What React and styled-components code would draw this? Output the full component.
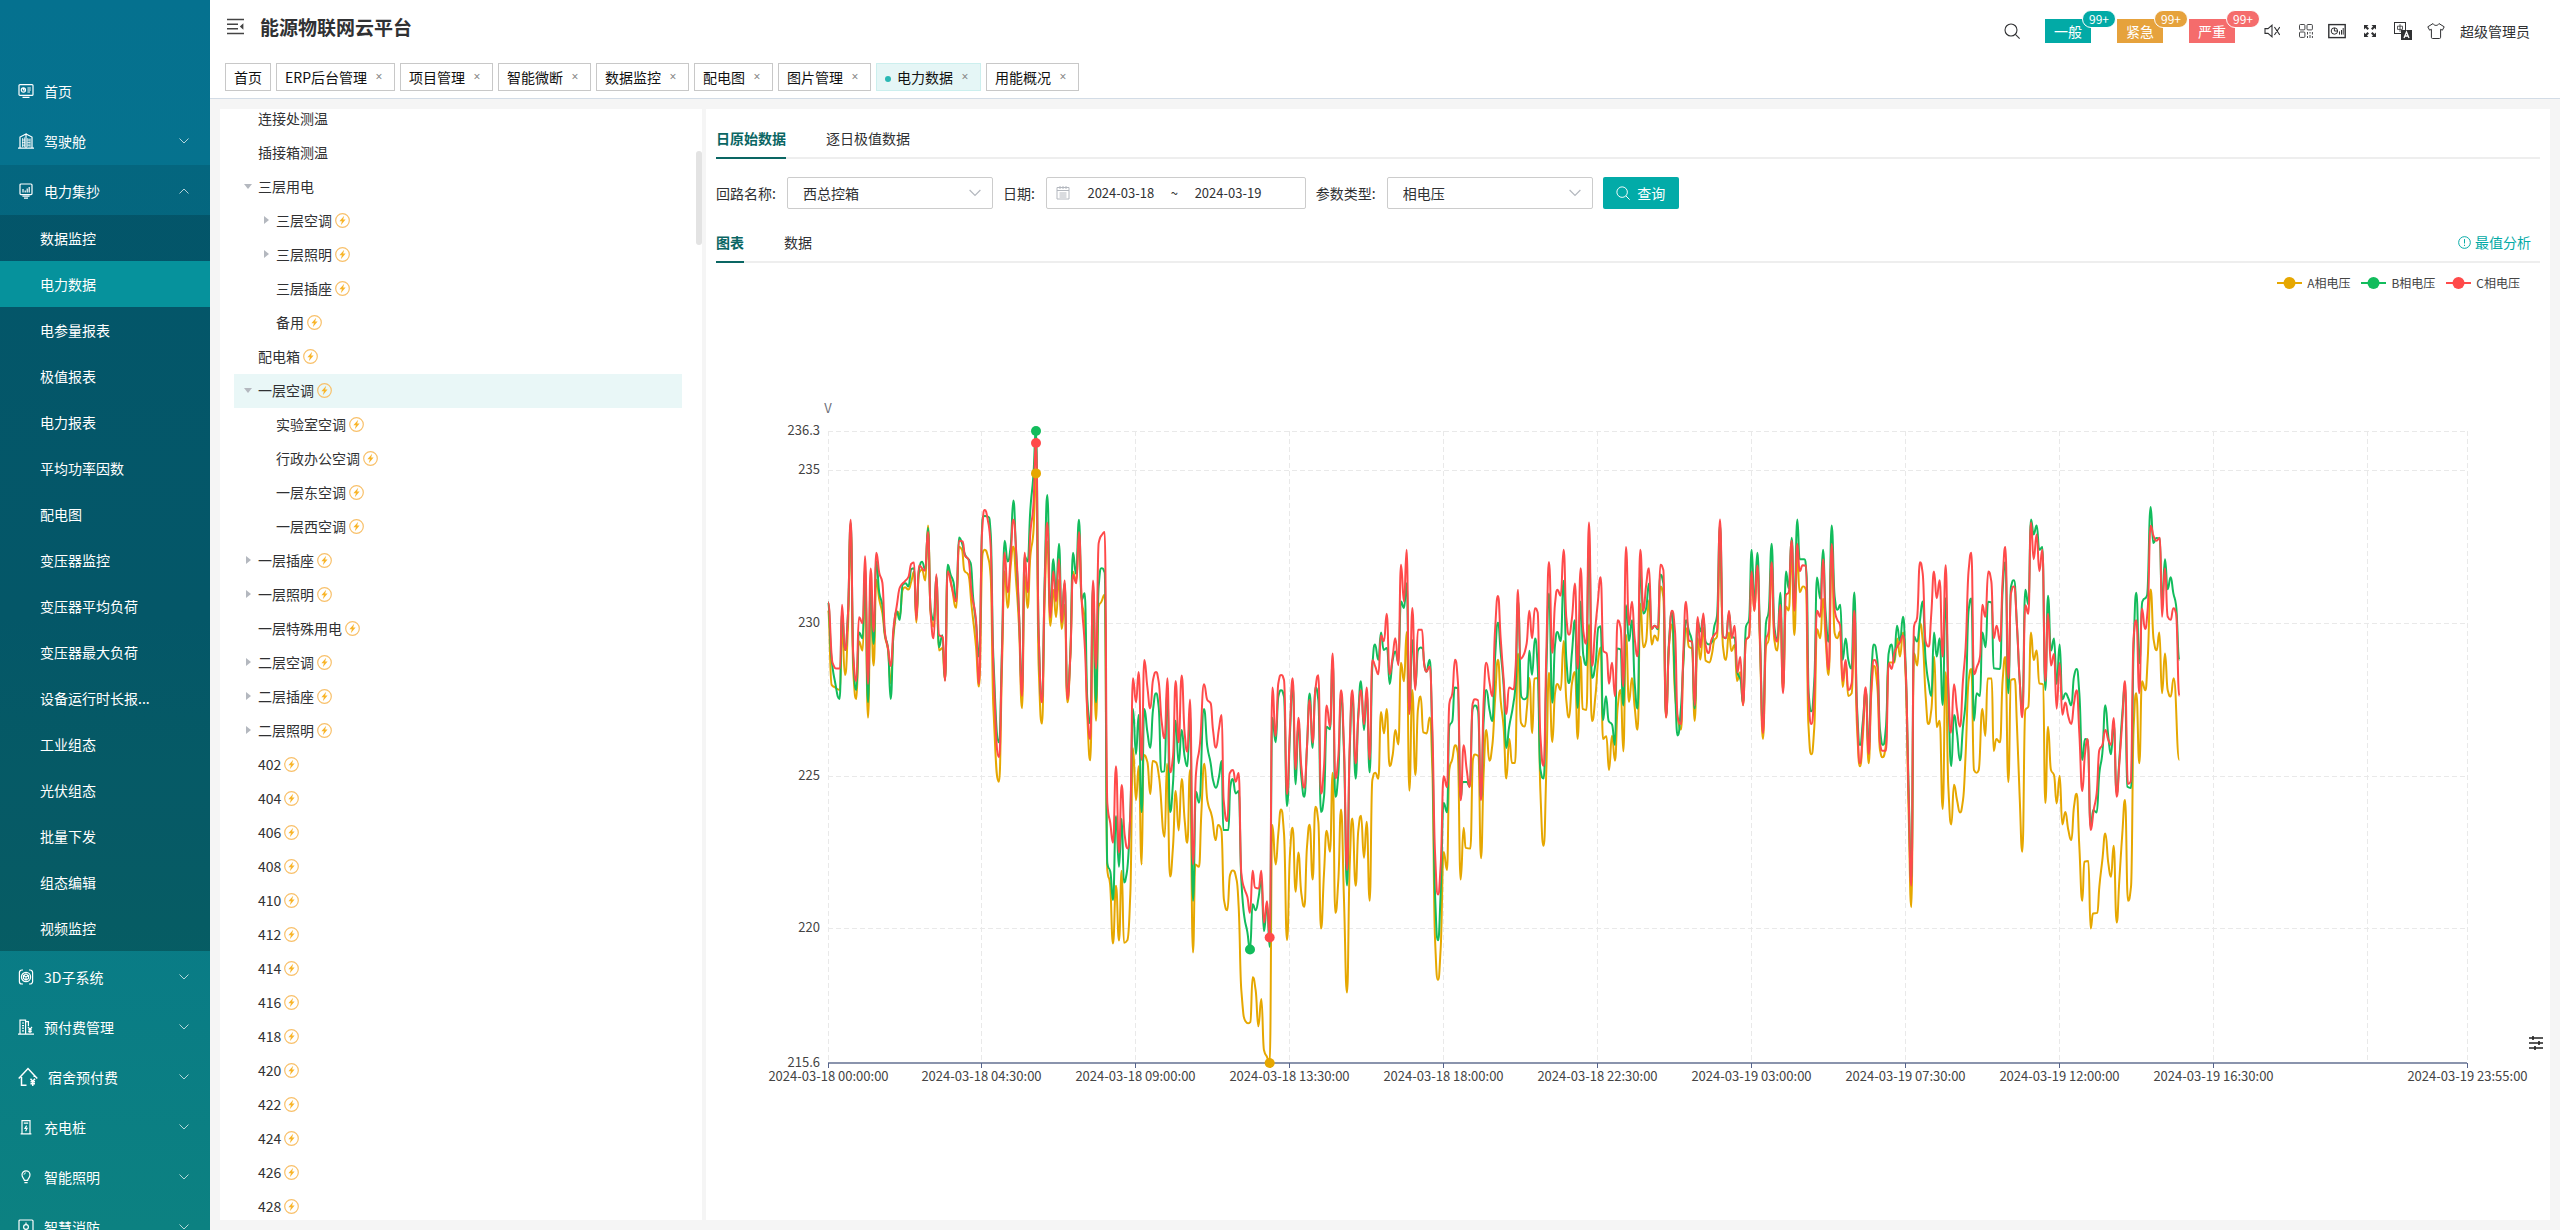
import { useEffect, useRef, useState } from "react";
import styled, { createGlobalStyle, css } from "styled-components";

const GlobalStyle = createGlobalStyle`
    * {
        box-sizing: border-box;
    }

    body {
        margin: 0;
        font-family: "Noto Sans CJK SC", "Noto Sans", sans-serif;
        font-size: 14px;
        line-height: 20px;
        color: #303133;
        background-color: #f5f5f5;
    }

    button, input, select {
        font: inherit;
        color: inherit;
    }

    button {
        padding: 0;
        border: 0;
        background: none;
        cursor: pointer;
    }

    ul {
        margin: 0;
        padding: 0;
        list-style: none;
    }

    a {
        color: inherit;
        text-decoration: none;
    }

    svg {
        display: block;
    }
`;

const Layout = styled.div`
    display: flex;
    height: 100vh;
    overflow: hidden;
`;

const Sidebar = styled.nav`
    flex: 0 0 210px;
    padding-top: 65px;
    overflow: hidden;
    color: #fff;
    background: linear-gradient(180deg, #05718f 0%, #06758b 50%, #0c8181 100%);
`;

const MenuItem = styled.button`
    display: flex;
    align-items: center;
    gap: 10px;
    width: 100%;
    height: 50px;
    padding: 2px 21px 0 18px;
    text-align: left;
    background-color: ${(props) => (props.$open ? "rgba(0, 0, 0, 0.1)" : "transparent")};
`;

const MenuLabel = styled.span`
    flex: 1;
`;

const SubMenu = styled.ul`
    background-color: rgba(0, 0, 0, 0.25);
`;

const SubMenuLink = styled.a`
    display: block;
    height: 46px;
    padding-left: 40px;
    line-height: 46px;
    background-color: ${(props) => (props.$active ? "#06929c" : "transparent")};
`;

const Main = styled.div`
    flex: 1;
    min-width: 0;
    display: flex;
    flex-direction: column;
`;

const Header = styled.header`
    background-color: #fff;
    border-bottom: 1px solid #d3dce6;
`;

const HeaderTop = styled.div`
    display: flex;
    align-items: center;
    height: 55px;
    padding: 0 30px 2px 17px;
`;

const Title = styled.h1`
    flex: 1;
    margin: 0 0 0 16px;
    font-size: 19px;
    line-height: 28px;
    font-weight: 700;
`;

const HeaderTools = styled.div`
    display: flex;
    align-items: center;
    gap: 15px;
    height: 100%;
    padding-top: 9px;
`;

const AlarmList = styled.div`
    display: flex;
    gap: 26px;
    margin: 0 12px 0 10px;
`;

const AlarmTag = styled.button`
    position: relative;
    width: 46px;
    height: 24px;
    color: #fff;
    background-color: ${(props) => props.$color};
`;

const AlarmBadge = styled.span`
    position: absolute;
    top: -9px;
    left: 37px;
    padding: 0 6px;
    border: 1px solid #fff;
    border-radius: 10px;
    font-size: 12px;
    line-height: 16px;
    background-color: ${(props) => props.$color};
`;

const PageTabs = styled.div`
    display: flex;
    gap: 5px;
    padding: 8px 15px 7px;
`;

const PageTab = styled.div`
    display: flex;
    align-items: center;
    height: 28px;
    padding: 0 8px 1px;
    color: #111;
    border: 1px solid #c8c8c8;

    ${(props) =>
        props.$active &&
        css`
            background-color: #e5f6f6;
            border-color: #ccefee;

            &::before {
                content: "";
                width: 6px;
                height: 6px;
                margin: 4px 6px 0 0;
                border-radius: 50%;
                background-color: #2ab8b4;
            }
        `}
`;

const CloseButton = styled.button`
    width: 14px;
    margin-left: 5px;
    padding-top: 1px;
    font-family: "Noto Sans", sans-serif;
    font-size: 12px;
    color: #888;
`;

const Content = styled.main`
    flex: 1;
    min-height: 0;
    display: flex;
    gap: 4px;
    padding: 10px;
`;

const TreePanel = styled.aside`
    display: flex;
    flex: 0 0 482px;
    overflow: hidden;
    background-color: #fff;
`;

const TreeList = styled.ul`
    flex: 1;
    margin: -7px 14px 0;
`;

const TreeRow = styled.li`
    display: flex;
    align-items: center;
    gap: 3px;
    height: 34px;
    padding: 0 0 2px ${(props) => 7 + props.$level * 18}px;
    background-color: ${(props) => (props.$active ? "#e9f7f7" : "transparent")};
`;

const Caret = styled.button`
    display: flex;
    justify-content: center;
    width: 14px;
    color: #b4b8bf;
`;

const ScrollBar = styled.div`
    width: 6px;
    height: 94px;
    margin-top: 42px;
    border-radius: 3px;
    background-color: #e3e3e3;
`;

const DataPanel = styled.section`
    position: relative;
    flex: 1;
    min-width: 0;
    display: flex;
    flex-direction: column;
    padding: 16px 10px 0;
    background-color: #fff;
`;

const TabBar = styled.div`
    display: flex;
    gap: 40px;
    height: 34px;
    box-shadow: inset 0 -2px #eee;
`;

const TabButton = styled.button`
    height: 34px;
    padding-bottom: 8px;

    ${(props) =>
        props.$active &&
        css`
            font-weight: 700;
            color: #0a6663;
            box-shadow: inset 0 -2px #0a6663;
        `}
`;

const ExtremeButton = styled.button`
    display: flex;
    align-items: center;
    gap: 4px;
    height: 26px;
    margin-left: auto;
    padding-right: 9px;
    color: #02aaa6;
`;

const Filters = styled.form`
    display: flex;
    align-items: center;
    gap: 10px;
    padding: 18px 0 20px;
`;

const Field = styled.div`
    display: flex;
    align-items: center;
    gap: 11px;
`;

const fieldBox = css`
    height: 32px;
    border: 1px solid #ccc;
    border-radius: 2px;
    background-color: #fff;
`;

const SelectBox = styled.div`
    display: flex;
    align-items: center;
    width: 206px;
    padding-right: 11px;
    ${fieldBox}
`;

const Select = styled.select`
    flex: 1;
    height: 30px;
    padding: 0 15px;
    border: 0;
    appearance: none;
    background: none;
`;

const DateBox = styled.div`
    display: flex;
    align-items: center;
    width: 260px;
    padding-left: 8px;
    font-size: 13px;
    ${fieldBox}
`;

const DateInput = styled.input`
    width: 100px;
    padding: 0;
    border: 0;
    text-align: center;
`;

const QueryButton = styled.button`
    display: flex;
    align-items: center;
    justify-content: center;
    gap: 7px;
    width: 76px;
    height: 32px;
    border-radius: 2px;
    color: #fff;
    background-color: #02aba8;
`;

const Legend = styled.div`
    display: flex;
    justify-content: flex-end;
    gap: 11px;
    padding: 10px 20px 0 0;
`;

const LegendItem = styled.button`
    display: flex;
    align-items: center;
    gap: 5px;
    font-size: 12px;
    color: #444;
`;

const ChartBox = styled.div`
    flex: 1;
    min-height: 0;
    overflow: hidden;
`;

const AxisText = styled.text`
    font-size: 13px;
    fill: ${(props) => props.$color || "#444"};
    text-anchor: ${(props) => props.$anchor || "middle"};
`;

const SettingsButton = styled.button`
    position: absolute;
    right: 6px;
    bottom: 169px;
    color: #222;
`;

const Icon = ({ size = 16, box = 16, width = 1.2, children }) => (
    <svg
        width={size}
        height={size}
        viewBox={`0 0 ${box} ${box}`}
        fill="none"
        stroke="currentColor"
        strokeWidth={width}
        aria-hidden="true"
    >
        {children}
    </svg>
);

const menuIcons = {
    home: (
        <>
            <rect x="1" y="1.6" width="14" height="10.8" rx="1" />
            <circle cx="5.4" cy="7" r="2.1" />
            <path d="M5.4 5v2h2M9.4 5h3.4M9.4 7h3.4M9.4 9h2.6M4.5 14.4h7" />
        </>
    ),
    tower: (
        <>
            <path d="M0 15.2h16M2 15V4L8 1v14M8 1l6 3v11" />
            <path d="M4.6 5v9M6.4 4.4v9.800M9.800 5v9M12 5.400v9M4 7h3M4 9.600h3M4 12.200h3M9.400 7h3M9.400 9.600h3M9.400 12.200h3" strokeWidth="0.8" />
        </>
    ),
    meter: (
        <>
            <rect x="2" y="1" width="12" height="10.600" rx="1" />
            <path d="M5 9.600V6M7.200 9.600V7.400M9.200 9.600V5.400M11.200 9.600V4M4.400 13.200h7.200M6 15.200h4" />
        </>
    ),
    cube: (
        <>
            <path d="M5 1H4A2.6 2.6 0 0 0 1.4 3.600v8.800A2.6 2.6 0 0 0 4 15h1M11 1h1a2.6 2.6 0 0 1 2.6 2.600v8.800A2.6 2.6 0 0 1 12 15h-1" />
            <circle cx="8" cy="8" r="4.6" />
            <path d="M8 5l2.600 1.500v3L8 11 5.400 9.500v-3zM5.400 6.500L8 8l2.600-1.500M8 8v3" />
        </>
    ),
    prepay: (
        <>
            <path d="M0 15.2h16M2 15V1.2h5.6V15M7.6 2.6h2.8V7M4 4h2M4 6.6h2M4 9.2h2M4 11.8h2" />
            <path d="M10 8l2 2.4L14 8M12 10.4V14M10.2 10.8h3.6M10.2 12.6h3.6" />
        </>
    ),
    dorm: (
        <>
            <path d="M0.6 9.2L8 1.2l7.4 8M2.8 8v6.6h4M13 8V7" />
            <path d="M10 9.4l1.8 2 1.8-2M11.8 11.4v3.8M10 11.8h3.6M10 13.4h3.6" />
        </>
    ),
    charge: (
        <>
            <path d="M4 14.6V1.6h8v13M2.6 14.8h10.8M5.8 4.2h4.4" />
            <path d="M8.6 6.6L7 9.4h2L7.6 12.2" />
        </>
    ),
    bulb: (
        <>
            <path d="M6.4 11.4C6.2 9.6 4 8.6 4 5.8a4 4 0 0 1 8 0c0 2.8-2.2 3.8-2.4 5.6zM6.4 13.6h3.2" />
            <path d="M6 5.8a2 2 0 0 1 2-2" strokeWidth="0.8" />
        </>
    ),
    fire: (
        <>
            <rect x="1" y="1" width="14" height="14" rx="1" />
            <circle cx="8" cy="8" r="2.4" />
            <path d="M8 3.4v2M8 10.6v2M4.8 12.6h6.4" />
        </>
    ),
};

const Chevron = ({ up, size = 10, color = "currentColor" }) => (
    <svg width={size} height={size} viewBox="0 0 10 10" fill="none" stroke={color} aria-hidden="true">
        <path d={up ? "M0.5 7.5L5 3l4.5 4.5" : "M0.5 2.5L5 7l4.5-4.5"} />
    </svg>
);

const SearchIcon = ({ size = 16 }) => (
    <Icon size={size} width={1.1}>
        <circle cx="7" cy="7" r="6" />
        <path d="M11.4 11.4l4.2 4.2" />
    </Icon>
);

const PowerIcon = () => (
    <svg width="15" height="15" viewBox="0 0 15 15" aria-hidden="true">
        <circle cx="7.5" cy="7.5" r="6.8" fill="none" stroke="#f8c06a" strokeWidth="1.2" />
        <path d="M9.2 2.8L4.4 8.2h2.5L5.8 12.2l4.8-5.600H8.100z" fill="#f9b52a" />
    </svg>
);

const menu = [
    { icon: "home", label: "首页", leaf: true },
    { icon: "tower", label: "驾驶舱" },
    {
        icon: "meter",
        label: "电力集抄",
        children: [
            "数据监控",
            "电力数据",
            "电参量报表",
            "极值报表",
            "电力报表",
            "平均功率因数",
            "配电图",
            "变压器监控",
            "变压器平均负荷",
            "变压器最大负荷",
            "设备运行时长报...",
            "工业组态",
            "光伏组态",
            "批量下发",
            "组态编辑",
            "视频监控",
        ],
    },
    { icon: "cube", label: "3D子系统" },
    { icon: "prepay", label: "预付费管理" },
    { icon: "dorm", label: "宿舍预付费", size: 20 },
    { icon: "charge", label: "充电桩" },
    { icon: "bulb", label: "智能照明" },
    { icon: "fire", label: "智慧消防" },
];

const alarms = [
    { label: "一般", color: "#02aaa6" },
    { label: "紧急", color: "#e6a23c" },
    { label: "严重", color: "#f56c6c" },
];

const pageTabs = [
    "首页",
    "ERP后台管理",
    "项目管理",
    "智能微断",
    "数据监控",
    "配电图",
    "图片管理",
    "电力数据",
    "用能概况",
];

// caret: "down" for an open node, "right" for a closed one
const tree = [
    { label: "连接处测温", plain: true },
    { label: "插接箱测温", plain: true },
    { label: "三层用电", caret: "down", plain: true },
    { label: "三层空调", level: 1, caret: "right" },
    { label: "三层照明", level: 1, caret: "right" },
    { label: "三层插座", level: 1 },
    { label: "备用", level: 1 },
    { label: "配电箱" },
    { label: "一层空调", caret: "down", active: true },
    { label: "实验室空调", level: 1 },
    { label: "行政办公空调", level: 1 },
    { label: "一层东空调", level: 1 },
    { label: "一层西空调", level: 1 },
    { label: "一层插座", caret: "right" },
    { label: "一层照明", caret: "right" },
    { label: "一层特殊用电" },
    { label: "二层空调", caret: "right" },
    { label: "二层插座", caret: "right" },
    { label: "二层照明", caret: "right" },
    ...[402, 404, 406, 408, 410, 412, 414, 416, 418, 420, 422, 424, 426, 428].map((n) => ({
        label: String(n),
    })),
];

// The curves are stored on a 4917 x 1894 grid (48h wide, 215.6V to 236.3V high),
// cut into four chunks that each have their own origin and vertical step.
const GRID_W = 4917;
const GRID_H = 1894;
const chunks = [
    { x: -84, y: -94, step: 1 },
    { x: 816, y: 506, step: 1 },
    { x: 1416, y: 146, step: 1.033 },
    { x: 2616, y: 146, step: 1 },
];

const series = [
    {
        name: "A相电压",
        color: "#e6a700",
        marks: [
            [624, 127],
            [1325, 1894],
        ],
        data: [
            "84,630 95,855 105,862 120,870 126,680 135,825 144,680 152,390 160,820 169,897 177,725 188,752 195,530 204,953 212,620 221,797 229,540 238,600 247,640 255,710 264,750 272,850 281,700 293,635 299,650 308,570 315,562 325,569 334,545 342,516 349,668 357,520 366,510 376,542 384,377 392,640 401,680 409,560 417,752 427,744 435,840 443,505 455,560 469,624 477,441 486,450 493,512 505,525 515,620 528,740 537,860 548,460 554,450 566,480 572,530 580,920 597,1145 606,800 614,515 623,624 632,500 640,441 648,540 657,680 666,925 674,525 683,624 691,470 700,400 708,221 716,800 726,971 734,600 742,425 751,678 760,570 768,652 777,540 785,687 794,615 802,907 811,770 819,516 828,545 837,420 845,600 854,660 862,950 871,1081 879,600 888,962 896,620 904,606 914,585",
            "22,810 30,850 39,1030 48,857 57,1021 65,812 72,1028 82,1020 91,880 99,445 108,600 116,499 125,793 131,465 142,485 151,582 158,483 168,487 177,530 194,710 201,491 210,829 219,740 227,573 236,691 245,537 254,660 262,728 270,510 279,1057 286,793 297,800 304,640 313,491 322,600 336,650 347,720 354,675 364,690 372,900 382,930 390,825 399,811 410,840 416,920 424,1170 436,1262 444,1269 451,1265 458,1131 467,1170 475,1278 484,1196 492,1350 501,1370 509,1388 517,675 527,793 535,700 543,628 552,700 561,1020 570,760 578,683 587,875 595,757 604,880 613,920 621,740 629,674 638,838 646,620 655,665 663,985 672,820 680,692 690,755 698,518 706,938 715,840 723,628 732,900 741,1177 749,800 757,655 767,857 775,690 783,647 792,773 800,665 809,902 817,540 826,518 835,536 843,336 852,400 860,327 869,498 878,465 886,390",
            "295,768 303,531 312,585 320,442 328,902 337,610 346,857 354,665 362,629 370,733 380,736 389,690 397,840 405,1330 414,1451 422,1360 431,1080 441,1132 448,840 457,810 465,770 473,790 482,1160 491,1010 497,1068 511,1070 519,810 525,797 535,802 543,1098 551,850 559,726 568,815 577,770 585,640 594,522 602,640 611,720 619,867 628,752 636,822 645,822 654,504 663,705 674,716 681,660 688,575 697,735 703,577 714,575 721,900 731,1062 739,840 747,560 757,761 765,620 772,593 782,610 791,468 799,640 807,690 816,590 825,558 833,752 842,513 848,665 859,668 867,420 876,700 887,620 895,520 902,487 909,752 919,744 927,842 936,743 945,815 953,660 962,610 970,788 978,450 987,645 996,575 1004,660 1013,725 1021,360 1030,486 1038,470 1047,350 1055,478 1064,452 1074,467 1081,310 1090,340 1098,690 1107,480 1116,420 1125,620 1133,690 1143,725 1150,530 1158,430 1167,485 1176,490 1184,700 1193,460 1201,522 1210,430 1217,525 1228,530 1236,505 1243,465 1251,455",
            "60,200 69,500 78,540 87,457 94,513 104,495 111,603 121,577 129,676 138,480 147,470 155,290 163,393 172,265 180,500 189,777 198,500 206,480 215,270 223,480 232,512 241,385 249,630 258,380 266,392 275,230 283,466 292,230 299,337 309,320 318,330 325,730 334,823 343,740 351,448 361,475 369,357 377,480 386,585 395,230 404,460 412,475 420,455 428,621 437,550 445,648 455,640 463,458 471,740 480,859 489,760 497,630 506,850 514,640 522,558 532,620 540,810 548,832 557,800 566,548 583,548 592,476 600,530 609,458 617,590 626,1000 634,1281 642,520 652,557 660,430 668,480 677,650 685,732 694,690 703,531 710,741 719,722 728,987 737,577 745,920 754,1033 762,914 771,960 780,997 789,960 797,820 806,600 814,567 822,870 830,878 836,870 847,686 856,768 863,596 875,596 881,813 889,777 900,787 908,600 916,531 925,906 933,600 944,597 951,740 959,950 967,1115 976,690 985,680 993,458 1001,540 1010,512 1018,610 1029,613 1036,969 1044,740 1053,870 1062,885 1070,970 1079,887 1087,1033 1096,996 1105,1050 1114,1080 1122,980 1130,941 1138,1100 1147,1262 1153,1145 1165,1143 1172,1345 1179,1300 1192,1298 1198,1220 1207,1140 1216,1060 1225,1150 1233,1190 1241,1097 1250,1327 1258,1200 1267,1060 1275,960 1284,1262 1293,1220 1301,740 1309,640 1318,850 1326,604 1336,631 1343,540 1352,329 1361,480 1370,511 1378,458 1386,640 1395,521 1403,630 1412,650 1421,595 1438,840",
        ],
    },
    {
        name: "B相电压",
        color: "#12bc5c",
        marks: [
            [624, 0],
            [1266, 1554],
        ],
        data: [
            "84,607 94,770 104,840 119,897 126,640 135,750 144,640 152,370 160,780 169,870 177,698 188,715 195,500 204,907 212,560 221,732 229,485 238,580 247,615 255,705 264,745 272,897 281,690 290,635 299,660 308,555 317,550 325,560 334,508 342,505 349,650 357,510 366,486 376,510 384,385 392,630 401,660 409,530 417,742 427,706 435,840 443,495 452,525 460,545 469,600 477,413 486,430 495,465 512,490 520,600 528,670 537,770 548,352 554,349 566,352 572,400 580,770 597,1027 606,740 614,423 623,485 632,440 640,302 648,450 657,640 666,860 674,470 683,485 691,330 700,230 708,93 716,700 726,900 734,540 742,286 751,640 760,478 768,580 777,432 785,650 794,550 802,885 811,760 819,459 828,522 837,360 845,600 854,580 862,900 871,970 879,560 888,907 896,560 904,505 914,518",
            "22,790 31,815 39,900 48,648 57,800 65,656 72,847 80,820 91,640 99,327 108,462 116,345 125,636 133,327 142,395 151,443 159,330 168,280 176,320 184,515 193,514 202,280 210,636 219,550 227,362 236,490 245,390 254,470 262,499 270,340 279,902 288,575 297,608 312,327 322,440 332,490 339,540 348,563 357,530 365,483 370,690 385,690 391,560 398,537 407,580 416,573 424,840 433,950 442,995 450,1048 458,912 467,930 476,890 484,840 492,993 501,915 509,1040 517,353 527,427 535,290 543,271 552,290 561,618 570,400 578,255 587,553 595,370 604,530 613,590 621,440 629,281 638,444 646,262 655,300 663,636 672,590 680,380 690,388 698,180 706,590 715,520 723,290 732,460 741,856 749,460 757,285 767,536 775,340 783,244 792,390 800,280 809,517 817,200 825,134 835,180 843,98 851,150 861,144 869,252 878,180 886,155",
            "295,530 303,353 312,372 320,300 328,670 337,465 346,600 354,495 362,487 368,490 373,535 379,557 389,522 397,760 405,1200 414,1336 422,1200 431,938 441,965 448,715 457,700 464,603 473,605 482,925 488,877 500,877 509,890 518,665 525,655 534,670 543,925 551,700 559,610 569,670 577,700 585,520 594,415 602,500 611,600 619,778 627,720 640,650 647,590 654,350 664,630 673,637 681,630 688,496 696,566 705,461 713,540 721,840 731,867 739,560 747,330 757,647 765,480 772,442 782,468 791,293 799,520 807,590 816,500 825,408 833,662 842,353 850,510 859,538 867,180 876,575 887,530 895,430 902,425 909,698 918,628 926,700 936,710 945,770 951,490 961,492 970,655 978,364 987,468 996,408 1004,590 1013,664 1021,260 1030,388 1038,375 1047,301 1055,433 1064,424 1074,434 1080,275 1090,300 1098,685 1107,470 1116,385 1125,600 1133,742 1143,660 1150,530 1158,408 1167,440 1176,470 1184,664 1193,410 1201,440 1210,400 1217,470 1228,478 1236,470 1243,425 1251,395",
            "60,135 69,470 78,475 87,400 95,470 104,475 112,577 122,601 129,670 138,440 147,420 155,210 163,370 172,219 180,470 189,740 198,430 206,395 215,192 223,440 232,480 241,339 249,620 258,275 266,325 275,174 283,370 292,119 299,238 313,238 320,290 326,640 334,694 343,600 351,293 361,357 369,210 377,400 386,485 395,137 404,350 412,390 421,375 428,540 437,476 445,540 454,566 463,338 471,680 480,795 489,720 497,630 506,800 514,580 522,494 532,540 540,750 549,795 558,740 566,520 575,494 582,545 591,438 600,484 609,411 617,560 626,930 634,1200 642,470 651,485 660,420 668,365 677,540 686,610 694,648 702,458 710,530 719,475 728,675 737,355 745,640 754,858 762,705 771,760 780,841 789,740 797,660 806,390 814,356 822,722 830,640 840,648 847,458 857,502 864,366 875,368 881,565 900,567 908,330 916,247 925,640 933,320 942,301 951,440 959,600 967,690 976,330 985,374 993,119 1001,164 1010,137 1018,210 1027,202 1036,630 1044,348 1053,512 1062,476 1070,612 1079,494 1087,658 1097,640 1105,655 1114,676 1122,590 1130,567 1138,640 1147,840 1155,777 1163,780 1172,1040 1180,990 1190,997 1198,880 1207,820 1216,676 1225,770 1233,823 1241,730 1250,940 1258,840 1267,700 1275,620 1282,920 1293,924 1301,500 1309,339 1318,550 1327,365 1341,347 1352,82 1360,190 1369,175 1379,176 1386,370 1395,238 1403,328 1412,292 1420,340 1428,375 1438,540",
        ],
    },
    {
        name: "C相电压",
        color: "#ff4a4a",
        marks: [
            [624, 36],
            [1325, 1518],
        ],
        data: [
            "84,607 98,790 110,806 120,806 126,615 135,750 144,640 152,360 160,770 169,843 177,652 188,670 195,469 204,852 212,506 221,695 229,459 238,520 247,548 255,700 264,745 272,798 281,680 290,620 300,562 315,544 325,532 334,492 342,488 349,660 357,497 375,513 384,397 392,640 401,715 409,523 417,705 428,712 435,843 443,515 455,560 469,605 477,423 488,425 495,468 505,478 515,580 528,660 537,852 546,400 554,331 565,370 572,440 580,800 597,1072 606,760 614,459 623,577 632,470 640,360 650,480 657,640 666,888 674,459 683,577 691,400 700,320 708,130 716,700 726,907 734,560 742,369 751,652 760,515 768,605 777,478 785,668 794,542 802,897 811,770 819,525 829,550 837,397 845,600 855,750 862,930 871,1017 879,542 888,806 896,430 906,405 914,397",
            "22,610 31,670 39,728 48,499 57,757 65,555 74,705 83,745 91,640 99,235 108,307 116,216 125,480 133,180 142,260 151,325 159,240 168,216 176,245 185,365 194,415 202,235 210,517 219,470 227,243 236,427 245,227 254,400 262,455 270,299 279,793 288,520 300,430 312,253 322,300 332,310 339,390 348,443 357,385 365,345 371,600 382,663 389,520 399,510 407,545 416,519 424,820 433,865 442,890 450,938 458,812 465,862 476,865 484,812 492,967 501,903 509,1012 517,263 527,408 535,250 543,225 552,240 561,582 570,380 578,235 587,508 595,353 604,500 613,563 621,440 629,300 638,428 646,270 655,226 663,580 672,500 680,317 690,380 698,161 706,535 715,470 723,271 732,440 741,810 749,440 757,271 767,490 775,350 783,271 792,373 800,263 809,478 817,181 826,200 835,223 843,107 852,124 860,42 869,223 878,170 886,115",
            "295,538 303,247 312,353 320,203 328,680 337,372 346,610 354,435 366,435 373,540 379,557 389,542 397,720 405,1080 414,1203 422,1120 431,860 441,892 448,650 457,620 465,522 474,590 482,930 491,770 500,840 509,892 518,650 525,637 534,640 543,930 551,640 559,531 569,590 577,628 585,440 594,337 602,460 611,580 619,680 627,603 640,608 647,540 654,319 661,520 670,510 680,475 688,380 696,460 705,373 713,385 721,740 731,830 739,500 747,239 757,502 765,360 772,319 782,336 791,203 799,400 807,450 816,400 825,301 833,548 842,257 850,440 859,476 867,124 876,540 885,440 893,360 902,283 910,497 920,504 927,592 936,531 945,628 953,408 962,430 970,600 978,195 987,422 996,354 1004,460 1013,512 1021,203 1030,380 1038,310 1047,257 1055,433 1064,424 1074,430 1081,247 1090,262 1098,690 1107,480 1116,380 1125,440 1133,690 1143,709 1150,500 1158,354 1167,467 1176,470 1184,655 1193,398 1201,486 1210,388 1217,480 1226,503 1234,465 1243,450 1251,440",
            "60,119 69,470 78,475 87,393 95,475 104,438 112,577 121,531 129,676 138,480 147,470 155,275 163,393 172,257 180,480 189,760 198,480 206,455 215,247 223,460 232,485 241,375 249,640 258,345 266,338 275,183 283,393 292,192 299,274 308,256 318,258 325,640 334,732 343,640 351,393 361,411 369,238 377,440 386,568 395,193 404,390 412,420 420,435 428,603 437,540 445,630 455,610 463,393 471,700 480,850 489,740 497,622 506,822 514,620 522,540 532,560 540,790 547,812 558,812 566,550 575,567 583,520 592,500 601,485 609,467 617,570 626,950 634,1217 642,440 651,415 660,247 668,280 677,485 686,500 694,400 702,275 710,355 719,301 728,530 737,256 745,620 753,758 762,613 771,690 780,740 789,600 797,500 806,270 814,219 822,583 831,560 840,530 847,375 856,411 865,275 874,305 881,475 890,438 900,484 908,300 916,202 925,595 933,340 942,320 951,440 959,600 967,712 976,376 985,402 993,128 1001,238 1010,164 1018,274 1027,210 1036,603 1044,402 1053,557 1062,522 1070,686 1079,549 1087,704 1096,668 1105,710 1114,732 1122,670 1130,631 1138,760 1147,933 1155,820 1163,777 1172,1050 1181,990 1190,940 1198,810 1207,795 1216,750 1225,780 1233,795 1241,714 1250,950 1258,850 1267,720 1275,604 1284,912 1292,905 1301,470 1309,421 1318,640 1326,386 1335,447 1343,390 1352,138 1361,170 1369,183 1380,174 1386,411 1395,265 1403,410 1412,420 1420,385 1428,400 1438,648",
        ],
    },
];

const yTicks = [236.3, 235, 230, 225, 220, 215.6];

// one tick every 54 five-minute slots, the last slot is 575
const xTicks = [
    { slot: 0, label: "2024-03-18 00:00:00" },
    { slot: 54, label: "2024-03-18 04:30:00" },
    { slot: 108, label: "2024-03-18 09:00:00" },
    { slot: 162, label: "2024-03-18 13:30:00" },
    { slot: 216, label: "2024-03-18 18:00:00" },
    { slot: 270, label: "2024-03-18 22:30:00" },
    { slot: 324, label: "2024-03-19 03:00:00" },
    { slot: 378, label: "2024-03-19 07:30:00" },
    { slot: 432, label: "2024-03-19 12:00:00" },
    { slot: 486, label: "2024-03-19 16:30:00" },
    { slot: 540 },
    { slot: 575, label: "2024-03-19 23:55:00" },
];

const readPoints = (data) =>
    data.flatMap((part, i) => {
        const { x, y, step } = chunks[i];
        return part.split(" ").map((pair) => {
            const [px, py] = pair.split(",").map(Number);
            return [px + x, py * step + y];
        });
    });

// Monotone curve with handles half a step long, flat at every peak and dip
const smoothPath = (points) => {
    const slope = (a, b) => (b[1] - a[1]) / (b[0] - a[0]);
    const tangents = points.map((p, i) => {
        if (i === 0 || i === points.length - 1) return 0;
        const before = slope(points[i - 1], p);
        const after = slope(p, points[i + 1]);
        if (before * after <= 0) return 0;
        return (2 * before * after) / (before + after);
    });

    return points.reduce((path, p, i) => {
        if (i === 0) return `M${p[0]},${p[1]}`;
        const prev = points[i - 1];
        const dx = (p[0] - prev[0]) / 2;
        const c1 = `${prev[0] + dx},${prev[1] + tangents[i - 1] * dx}`;
        const c2 = `${p[0] - dx},${p[1] - tangents[i] * dx}`;
        return `${path}C${c1} ${c2} ${p[0]},${p[1]}`;
    }, "");
};

const margin = { top: 138, right: 73, bottom: 157, left: 112 };

const VoltageChart = () => {
    const ref = useRef(null);
    const [size, setSize] = useState({ width: 0, height: 0 });

    useEffect(() => {
        const observer = new ResizeObserver(([entry]) => {
            const { width, height } = entry.contentRect;
            setSize({ width: Math.round(width), height: Math.round(height) });
        });
        observer.observe(ref.current);
        return () => observer.disconnect();
    }, []);

    const plotW = Math.max(size.width - margin.left - margin.right, 0);
    const plotH = Math.max(size.height - margin.top - margin.bottom, 0);
    const right = margin.left + plotW;
    const bottom = margin.top + plotH;
    const slotX = (slot) => Math.floor(margin.left + (slot / 575) * plotW) + 0.5;
    const voltY = (volt) => Math.floor(margin.top + ((236.3 - volt) / 20.7) * plotH) + 0.5;
    const toPlot = ([x, y]) => [
        margin.left + (x / GRID_W) * plotW,
        margin.top + (y / GRID_H) * plotH,
    ];

    return (
        <ChartBox ref={ref}>
            {plotW > 0 && (
                <svg width={size.width} height={size.height} role="img" aria-label="相电压">
                    <AxisText x={margin.left} y={margin.top - 18} $color="#6e7079">
                        V
                    </AxisText>
                    <g stroke="#e9e9e9" strokeDasharray="5 3">
                        {yTicks.slice(0, -1).map((volt) => (
                            <line key={volt} x1={margin.left} x2={right} y1={voltY(volt)} y2={voltY(volt)} />
                        ))}
                        {xTicks.map(({ slot }) => (
                            <line key={slot} x1={slotX(slot)} x2={slotX(slot)} y1={margin.top} y2={bottom} />
                        ))}
                    </g>
                    {yTicks.map((volt) => (
                        <AxisText key={volt} x={margin.left - 8} y={voltY(volt) + 3} $anchor="end">
                            {volt}
                        </AxisText>
                    ))}
                    <line x1={margin.left} x2={right} y1={bottom} y2={bottom} stroke="#8a94ad" strokeWidth="2" />
                    {xTicks
                        .filter(({ label }) => label)
                        .map(({ slot, label }) => (
                            <g key={slot}>
                                <path d={`M${slotX(slot)} ${bottom}v5`} stroke="#56648c" />
                                <AxisText x={slotX(slot)} y={bottom + 18}>
                                    {label}
                                </AxisText>
                            </g>
                        ))}
                    {series.map(({ name, color, data }) => (
                        <path
                            key={name}
                            d={smoothPath(readPoints(data).map(toPlot))}
                            fill="none"
                            stroke={color}
                            strokeWidth="2"
                            strokeLinejoin="bevel"
                        />
                    ))}
                    {series.map(({ name, color, marks }) =>
                        marks.map((mark) => {
                            const [cx, cy] = toPlot(mark);
                            return <circle key={name + cy} cx={cx} cy={cy} r="5" fill={color} />;
                        })
                    )}
                </svg>
            )}
        </ChartBox>
    );
};

const SideMenu = () => (
    <Sidebar>
        {menu.map(({ icon, label, size, leaf, children }) => (
            <div key={label}>
                <MenuItem type="button" $open={Boolean(children)}>
                    <Icon size={size}>{menuIcons[icon]}</Icon>
                    <MenuLabel>{label}</MenuLabel>
                    {!leaf && <Chevron up={Boolean(children)} color="rgba(255, 255, 255, 0.7)" />}
                </MenuItem>
                {children && (
                    <SubMenu>
                        {children.map((item) => (
                            <li key={item}>
                                <SubMenuLink href="#" $active={item === "电力数据"}>
                                    {item}
                                </SubMenuLink>
                            </li>
                        ))}
                    </SubMenu>
                )}
            </div>
        ))}
    </Sidebar>
);

const TopBar = () => (
    <Header>
        <HeaderTop>
            <button type="button" aria-label="折叠菜单">
                <Icon size={17} box={17} width={1.4}>
                    <path d="M0 1.5h17M0 6.2h11M0 10.8h11M0 15.5h17" stroke="#444" />
                    <path d="M16.4 5.2v6.6L12.8 8.5z" fill="#444" stroke="none" />
                </Icon>
            </button>
            <Title>能源物联网云平台</Title>
            <HeaderTools>
                <button type="button" aria-label="搜索">
                    <SearchIcon />
                </button>
                <AlarmList>
                    {alarms.map(({ label, color }) => (
                        <AlarmTag key={label} type="button" $color={color}>
                            {label}
                            <AlarmBadge $color={color}>99+</AlarmBadge>
                        </AlarmTag>
                    ))}
                </AlarmList>
                <button type="button" aria-label="静音">
                    <Icon size={18} box={18} width={1.1}>
                        <path d="M3 6.6h3l4-3.4v11.6l-4-3.4H3zM12.4 5l5.4 8M17.8 5l-5.4 8" />
                    </Icon>
                </button>
                <button type="button" aria-label="二维码">
                    <Icon size={18} box={18} width={0.9}>
                        <rect x="4.5" y="2.5" width="5.4" height="5.4" rx="1" />
                        <rect x="12" y="2.5" width="5.4" height="5.4" rx="1" />
                        <rect x="4.5" y="10" width="5.4" height="5.4" rx="1" />
                        <path d="M12.5 10v2.5M15 10v1.5M17.4 10v2.5M12.5 14v2M15 13v3M17.4 14v2" />
                    </Icon>
                </button>
                <button type="button" aria-label="统计">
                    <Icon size={18} box={18} width={1.4}>
                        <rect x="0.8" y="2.6" width="16.4" height="13" />
                        <circle cx="6.4" cy="9" r="3.2" strokeWidth="1" />
                        <path d="M6.4 6v3h3M11.5 12.6V9.4M13.500 12.600V8M15.200 12.600V6" strokeWidth="1" />
                    </Icon>
                </button>
                <button type="button" aria-label="全屏">
                    <Icon size={18} box={18}>
                        <path
                            d="M3 3h4.500L6 4.500l2 2L6.500 8l-2-2L3 7.500zM15 3v4.500L13.500 6l-2 2L10 6.500l2-2L10.500 3zM3 15v-4.500L4.500 12l2-2L8 11.500l-2 2L7.500 15zM15 15h-4.500l1.500-1.500-2-2 1.500-1.500 2 2 1.500-1.500z"
                            fill="currentColor"
                            stroke="none"
                        />
                    </Icon>
                </button>
                <button type="button" aria-label="语言">
                    <Icon size={18} box={18} width={1}>
                        <rect x="0.5" y="0.5" width="11" height="11" />
                        <path d="M3.5 4.2h5v3.2h-5zM6 2.2v7.6" strokeWidth="0.8" />
                        <rect x="7" y="8" width="11" height="10" fill="#303133" stroke="none" />
                        <path d="M10 16l2.5-6 2.5 6M11 14h3" stroke="#fff" strokeWidth="1.3" />
                    </Icon>
                </button>
                <button type="button" aria-label="主题">
                    <Icon size={18} box={18} width={1}>
                        <path d="M6 1.6L0.8 4.8l1.8 3.4 1.8-.9v8a1.2 1.2 0 0 0 1.2 1.2h6.8a1.2 1.2 0 0 0 1.2-1.2v-8l1.8.9 1.8-3.4L12 1.6c-1.2 2.4-4.8 2.4-6 0z" />
                    </Icon>
                </button>
                <span>超级管理员</span>
            </HeaderTools>
        </HeaderTop>
        <PageTabs>
            {pageTabs.map((label) => (
                <PageTab key={label} $active={label === "电力数据"}>
                    <a href="#">{label}</a>
                    {label !== "首页" && (
                        <CloseButton type="button" aria-label={`关闭${label}`}>
                            ×
                        </CloseButton>
                    )}
                </PageTab>
            ))}
        </PageTabs>
    </Header>
);

const CircuitTree = () => (
    <TreePanel>
        <TreeList>
            {tree.map(({ label, level = 0, caret, active, plain }) => (
                <TreeRow key={label} $level={level} $active={active}>
                    <Caret type="button" aria-label={label}>
                        <svg width="8" height="8" viewBox="0 0 8 8" fill="currentColor">
                            {caret === "down" && <path d="M0 2h8L4 7z" />}
                            {caret === "right" && <path d="M2 0v8l5-4z" />}
                        </svg>
                    </Caret>
                    <span>{label}</span>
                    {!plain && <PowerIcon />}
                </TreeRow>
            ))}
        </TreeList>
        <ScrollBar />
    </TreePanel>
);

const FilterSelect = ({ id, label, value }) => (
    <Field>
        <label htmlFor={id}>{label}:</label>
        <SelectBox>
            <Select id={id} defaultValue={value}>
                <option>{value}</option>
            </Select>
            <Chevron size={12} color="#b4b8bf" />
        </SelectBox>
    </Field>
);

const App = () => (
    <>
        <GlobalStyle />
        <Layout>
            <SideMenu />
            <Main>
                <TopBar />
                <Content>
                    <CircuitTree />
                    <DataPanel>
                        <TabBar>
                            <TabButton type="button" $active>
                                日原始数据
                            </TabButton>
                            <TabButton type="button">逐日极值数据</TabButton>
                        </TabBar>
                        <Filters onSubmit={(e) => e.preventDefault()}>
                            <FilterSelect id="circuit" label="回路名称" value="西总控箱" />
                            <Field>
                                <label htmlFor="date-from">日期:</label>
                                <DateBox>
                                    <Icon size={16} width={1}>
                                        <path
                                            d="M2 2.5h12v11.5H2zM2 5.5h12M5 1v3M8 1v3M11 1v3M4.5 8h7M4.5 10h7M4.5 12h7"
                                            stroke="#b4b8bf"
                                        />
                                    </Icon>
                                    <DateInput id="date-from" defaultValue="2024-03-18" />
                                    <span>~</span>
                                    <DateInput aria-label="结束日期" defaultValue="2024-03-19" />
                                </DateBox>
                            </Field>
                            <FilterSelect id="param" label="参数类型" value="相电压" />
                            <QueryButton type="submit">
                                <SearchIcon size={14} />
                                查询
                            </QueryButton>
                        </Filters>
                        <TabBar>
                            <TabButton type="button" $active>
                                图表
                            </TabButton>
                            <TabButton type="button">数据</TabButton>
                            <ExtremeButton type="button">
                                <Icon size={13} width={1.2}>
                                    <circle cx="8" cy="8" r="7.2" />
                                    <path d="M8 3.8v5.4M8 10.8v1.5" />
                                </Icon>
                                最值分析
                            </ExtremeButton>
                        </TabBar>
                        <Legend>
                            {series.map(({ name, color }) => (
                                <LegendItem key={name} type="button">
                                    <svg width="25" height="14" viewBox="0 0 25 14" aria-hidden="true">
                                        <path d="M0 7h25" stroke={color} strokeWidth="2" />
                                        <circle cx="12.5" cy="7" r="6" fill={color} />
                                    </svg>
                                    {name}
                                </LegendItem>
                            ))}
                        </Legend>
                        <VoltageChart />
                        <SettingsButton type="button" aria-label="设置">
                            <Icon size={16} width={1.6}>
                                <path d="M1 3h14M1 8h14M1 13h14M5 1v4M11 6v4M7 11v4" />
                            </Icon>
                        </SettingsButton>
                    </DataPanel>
                </Content>
            </Main>
        </Layout>
    </>
);

export default App;
